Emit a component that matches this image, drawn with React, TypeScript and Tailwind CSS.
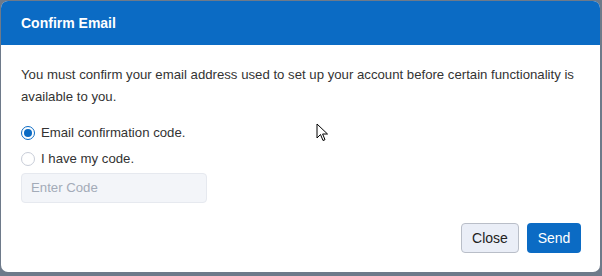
import React from "react";

export default function App() {
  return (
    <div className="w-[602px] h-[276px] bg-[#6e7a8a] pl-px pt-px" style={{ fontFamily: "'Liberation Sans', Arial, sans-serif" }}>
      <div className="relative w-[599px] h-[271px] bg-white rounded-[7px] overflow-hidden flex flex-col">
        <div className="h-[44px] bg-[#0b6bc4] flex items-center px-[20px]">
          <span className="text-white text-[14px] font-bold">Confirm Email</span>
        </div>
        <div className="pl-[20px] pr-[19px] pt-[19px] flex-1 flex flex-col">
          <p className="text-[13.2px] leading-[22px] text-[#333]">
            You must confirm your email address used to set up your account before certain functionality is available to you.
          </p>
          <div className="mt-[14px] flex items-center h-[22px]">
            <span className="w-[14px] h-[14px] rounded-full border border-[#0b6bc4] flex items-center justify-center">
              <span className="w-[8px] h-[8px] rounded-full bg-[#0b6bc4]" />
            </span>
            <span className="ml-[6px] text-[13.2px] text-[#333]">Email confirmation code.</span>
          </div>
          <div className="mt-[4px] flex items-center h-[22px]">
            <span className="w-[14px] h-[14px] rounded-full border border-[#c8cdd8] bg-white" />
            <span className="ml-[6px] text-[13.2px] text-[#333]">I have my code.</span>
          </div>
          <div className="mt-[3px] w-[186px] h-[30px] rounded-[4px] bg-[#f3f5f9] border border-[#e6e9ef] flex items-center px-[9px]">
            <span className="text-[13.2px] text-[#a3abb8]">Enter Code</span>
          </div>
          <div className="mt-[20px] flex justify-end gap-[8px]">
            <button className="h-[30px] w-[58px] rounded-[4px] bg-[#eaeef7] border border-[#b9bec8] text-[14px] text-[#222]">Close</button>
            <button className="h-[30px] w-[54px] rounded-[4px] bg-[#0b6bc4] text-[14px] text-white">Send</button>
          </div>
        </div>
        <svg className="absolute left-[315px] top-[122px]" width="14" height="20" viewBox="0 0 14 20">
          <path d="M1 1 L1 15 L4.5 11.5 L7 17.5 L9 16.7 L6.6 11 L11.5 11 Z" fill="white" stroke="black" strokeWidth="1" strokeLinejoin="round" />
        </svg>
      </div>
    </div>
  );
}
